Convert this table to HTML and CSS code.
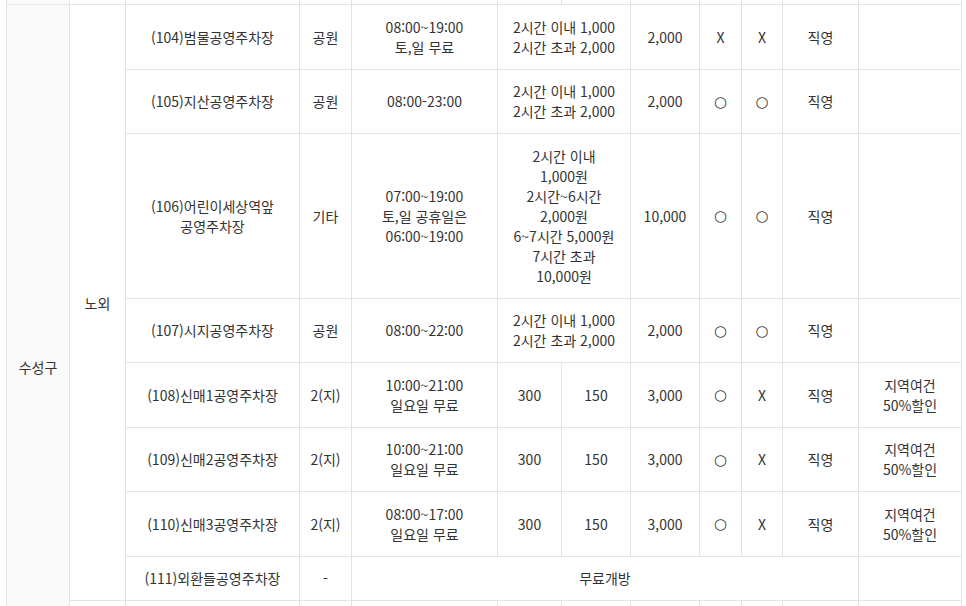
FILE: index.html
```html
<!DOCTYPE html>
<html lang="ko">
<head>
<meta charset="utf-8">
<title>주차장 현황</title>
<link rel="stylesheet" href="styles.css">
</head>
<body>
<div class="frame">
<table class="lots">
  <colgroup>
    <col class="c-gu"><col class="c-type"><col class="c-name"><col class="c-kind"><col class="c-hours">
    <col class="c-fa"><col class="c-fb"><col class="c-day"><col class="c-o1"><col class="c-o2"><col class="c-op"><col class="c-note">
  </colgroup>
  <tbody>
    <tr class="cut">
      <td class="gu"></td><td></td><td></td><td></td><td></td><td></td><td></td><td></td><td></td><td></td><td></td><td></td>
    </tr>
    <tr>
      <td class="gu" rowspan="10">수성구</td>
      <td rowspan="8">노외</td>
      <td>(104)범물공영주차장</td>
      <td>공원</td>
      <td>08:00~19:00<br>토,일 무료</td>
      <td colspan="2">2시간 이내 1,000<br>2시간 초과 2,000</td>
      <td>2,000</td>
      <td>X</td>
      <td>X</td>
      <td>직영</td>
      <td></td>
    </tr>
    <tr>
      <td>(105)지산공영주차장</td>
      <td>공원</td>
      <td>08:00-23:00</td>
      <td colspan="2">2시간 이내 1,000<br>2시간 초과 2,000</td>
      <td>2,000</td>
      <td><span class="o">○</span></td>
      <td><span class="o">○</span></td>
      <td>직영</td>
      <td></td>
    </tr>
    <tr>
      <td>(106)어린이세상역앞<br>공영주차장</td>
      <td>기타</td>
      <td>07:00~19:00<br>토,일 공휴일은<br>06:00~19:00</td>
      <td colspan="2">2시간 이내<br>1,000원<br>2시간~6시간<br>2,000원<br>6~7시간 5,000원<br>7시간 초과<br>10,000원</td>
      <td>10,000</td>
      <td><span class="o">○</span></td>
      <td><span class="o">○</span></td>
      <td>직영</td>
      <td></td>
    </tr>
    <tr>
      <td>(107)시지공영주차장</td>
      <td>공원</td>
      <td>08:00~22:00</td>
      <td colspan="2">2시간 이내 1,000<br>2시간 초과 2,000</td>
      <td>2,000</td>
      <td><span class="o">○</span></td>
      <td><span class="o">○</span></td>
      <td>직영</td>
      <td></td>
    </tr>
    <tr>
      <td>(108)신매1공영주차장</td>
      <td>2(지)</td>
      <td>10:00~21:00<br>일요일 무료</td>
      <td>300</td>
      <td>150</td>
      <td>3,000</td>
      <td><span class="o">○</span></td>
      <td>X</td>
      <td>직영</td>
      <td>지역여건<br>50%할인</td>
    </tr>
    <tr>
      <td>(109)신매2공영주차장</td>
      <td>2(지)</td>
      <td>10:00~21:00<br>일요일 무료</td>
      <td>300</td>
      <td>150</td>
      <td>3,000</td>
      <td><span class="o">○</span></td>
      <td>X</td>
      <td>직영</td>
      <td>지역여건<br>50%할인</td>
    </tr>
    <tr>
      <td>(110)신매3공영주차장</td>
      <td>2(지)</td>
      <td>08:00~17:00<br>일요일 무료</td>
      <td>300</td>
      <td>150</td>
      <td>3,000</td>
      <td><span class="o">○</span></td>
      <td>X</td>
      <td>직영</td>
      <td>지역여건<br>50%할인</td>
    </tr>
    <tr>
      <td>(111)외환들공영주차장</td>
      <td>-</td>
      <td colspan="7">무료개방</td>
      <td></td>
    </tr>
    <tr class="tail">
      <td rowspan="2"></td><td></td><td></td><td></td><td></td><td></td><td></td><td></td><td></td><td></td><td></td>
    </tr>
    <tr class="tail">
      <td></td><td></td><td></td><td></td><td></td><td></td><td></td><td></td><td></td><td></td>
    </tr>
  </tbody>
</table>
</div>
</body>
</html>
```

FILE: styles.css
```css
html, body {
  margin: 0;
  padding: 0;
  background: #ffffff;
}

body {
  font-family: "Noto Sans CJK KR", "Noto Sans", sans-serif;
  color: #333333;
}

.frame {
  height: 606px;
  overflow: hidden;
  padding-left: 6px;
}

.lots {
  border-collapse: collapse;
  table-layout: fixed;
  width: 955px;
  font-size: 14px;
  line-height: 20px;
}

.c-gu { width: 63px; }
.c-type { width: 56px; }
.c-name { width: 174px; }
.c-kind { width: 52px; }
.c-hours { width: 146px; }
.c-fa { width: 64px; }
.c-fb { width: 69px; }
.c-day { width: 69px; }
.c-o1 { width: 42px; }
.c-o2 { width: 41px; }
.c-op { width: 76px; }
.c-note { width: 103px; }

.lots td {
  border: 1px solid #e3e3e3;
  text-align: center;
  vertical-align: middle;
  padding: 11.75px 2px 11.75px;
  white-space: nowrap;
}

.lots td.gu {
  background: #fafafa;
}

.lots tr.cut td {
  height: 4px;
  padding: 0;
  border-top: none;
}

.lots tr.tail td {
  height: 40px;
}

.o {
  font-family: "DejaVu Sans", sans-serif;
  font-size: 15px;
}
```
